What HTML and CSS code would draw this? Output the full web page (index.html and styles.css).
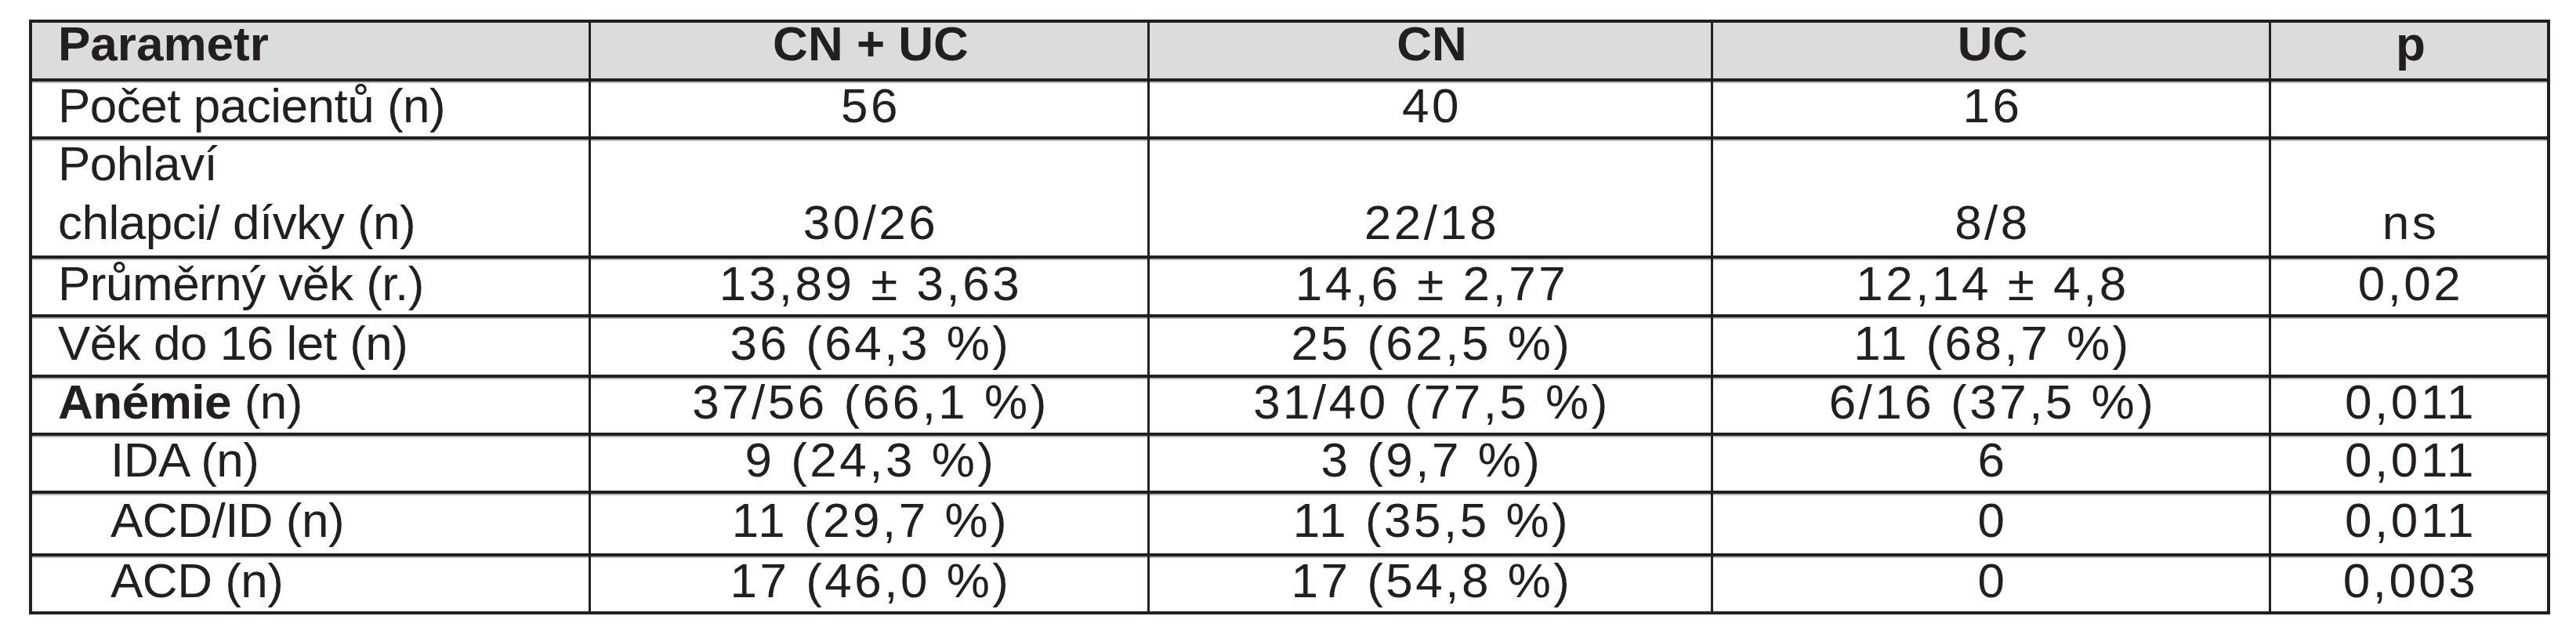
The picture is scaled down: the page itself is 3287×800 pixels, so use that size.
FILE: index.html
```html
<!DOCTYPE html>
<html lang="cs">
<head>
<meta charset="utf-8">
<title>Parametr – CN + UC</title>
<link rel="stylesheet" href="styles.css">
</head>
<body>
<div class="table">
  <div class="cell head label"><span>Parametr</span></div>
  <div class="cell head"><span>CN + UC</span></div>
  <div class="cell head"><span>CN</span></div>
  <div class="cell head"><span>UC</span></div>
  <div class="cell head"><span>p</span></div>

  <div class="cell label"><span>Počet pacientů (n)</span></div>
  <div class="cell"><span>56</span></div>
  <div class="cell"><span>40</span></div>
  <div class="cell"><span>16</span></div>
  <div class="cell"><span></span></div>

  <div class="cell tall label"><span>Pohlaví<br>chlapci/ dívky (n)</span></div>
  <div class="cell tall"><span>30/26</span></div>
  <div class="cell tall"><span>22/18</span></div>
  <div class="cell tall"><span>8/8</span></div>
  <div class="cell tall"><span>ns</span></div>

  <div class="cell label"><span>Průměrný věk (r.)</span></div>
  <div class="cell"><span>13,89 ± 3,63</span></div>
  <div class="cell"><span>14,6 ± 2,77</span></div>
  <div class="cell"><span>12,14 ± 4,8</span></div>
  <div class="cell"><span>0,02</span></div>

  <div class="cell label"><span>Věk do 16 let (n)</span></div>
  <div class="cell"><span>36 (64,3 %)</span></div>
  <div class="cell"><span>25 (62,5 %)</span></div>
  <div class="cell"><span>11 (68,7 %)</span></div>
  <div class="cell"><span></span></div>

  <div class="cell label"><span><b class="strong">Anémie</b> (n)</span></div>
  <div class="cell"><span>37/56 (66,1 %)</span></div>
  <div class="cell"><span>31/40 (77,5 %)</span></div>
  <div class="cell"><span>6/16 (37,5 %)</span></div>
  <div class="cell"><span>0,011</span></div>

  <div class="cell label indent"><span>IDA (n)</span></div>
  <div class="cell"><span>9 (24,3 %)</span></div>
  <div class="cell"><span>3 (9,7 %)</span></div>
  <div class="cell"><span>6</span></div>
  <div class="cell"><span>0,011</span></div>

  <div class="cell label indent"><span>ACD/ID (n)</span></div>
  <div class="cell"><span>11 (29,7 %)</span></div>
  <div class="cell"><span>11 (35,5 %)</span></div>
  <div class="cell"><span>0</span></div>
  <div class="cell"><span>0,011</span></div>

  <div class="cell label indent"><span>ACD (n)</span></div>
  <div class="cell"><span>17 (46,0 %)</span></div>
  <div class="cell"><span>17 (54,8 %)</span></div>
  <div class="cell"><span>0</span></div>
  <div class="cell"><span>0,003</span></div>
</div>
</body>
</html>
```

FILE: styles.css
```css
html, body {
  margin: 0;
  background: #ffffff;
}

body {
  padding: 20px 0 0 37px;
  font-family: "Liberation Sans", Arial, sans-serif;
  font-size: 62px;
  color: #231f20;
}

.table {
  display: inline-grid;
  grid-template-columns: 710px 710px 716px 709px 352px;
  grid-template-rows: 71px 70px 148px 71px 73px 70px 70px 76px 70px;
  column-gap: 3px;
  row-gap: 4px;
  border: 4px solid #231f20;
  background: #231f20;
}

.cell {
  display: flex;
  align-items: center;
  justify-content: center;
  background: #ffffff;
  padding-bottom: 7px;
  padding-left: 4px;
  line-height: 62px;
  white-space: nowrap;
  box-sizing: border-box;
  letter-spacing: 3.5px;
  box-shadow: inset 0 2px 0 #b9b9b9;
}

.label {
  justify-content: flex-start;
  padding-left: 33px;
  letter-spacing: -0.5px;
}

.indent {
  padding-left: 100px;
}

.head {
  background: #dcdcdd;
  font-weight: bold;
  padding-bottom: 16px;
  letter-spacing: 0;
  box-shadow: none;
}

.head.label {
  padding-left: 33px;
}

.tall {
  align-items: flex-end;
  line-height: 75px;
  padding-bottom: 5px;
}

.strong {
  font-weight: bold;
}
```
